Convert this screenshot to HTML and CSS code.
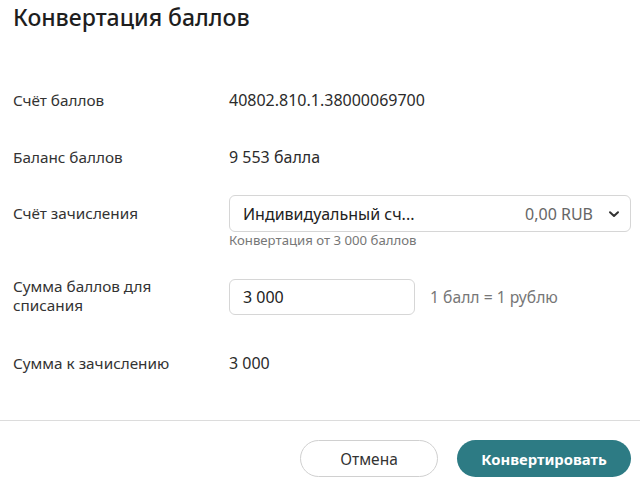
FILE: index.html
```html
<!DOCTYPE html>
<html lang="ru">
<head>
<meta charset="utf-8">
<link rel="stylesheet" href="styles.css">
</head>
<body>
<div class="dialog">
  <h1 class="title">Конвертация баллов</h1>
  <div class="form">
    <div class="row r1">
      <div class="label">Счёт баллов</div>
      <div class="value">40802.810.1.38000069700</div>
    </div>
    <div class="row r2">
      <div class="label">Баланс баллов</div>
      <div class="value">9 553 балла</div>
    </div>
    <div class="row r3">
      <div class="label">Счёт зачисления</div>
      <div class="field">
        <div class="select">
          <span class="sel-name">Индивидуальный сч...</span>
          <span class="sel-amount">0,00 RUB</span>
          <svg class="chev" width="14" height="14" viewBox="0 0 14 14"><path d="M3 5.2 L7 9 L11 5.2" fill="none" stroke="#333" stroke-width="2" stroke-linecap="round" stroke-linejoin="round"/></svg>
        </div>
        <div class="hint">Конвертация от 3 000 баллов</div>
      </div>
    </div>
    <div class="row r4">
      <div class="label">Сумма баллов для<br>списания</div>
      <div class="inline">
        <div class="input">3 000</div>
        <div class="rate">1 балл = 1 рублю</div>
      </div>
    </div>
    <div class="row r5">
      <div class="label">Сумма к зачислению</div>
      <div class="value">3 000</div>
    </div>
  </div>
  <div class="footer">
    <button class="btn btn-cancel">Отмена</button>
    <button class="btn btn-primary">Конвертировать</button>
  </div>
</div>
</body>
</html>
```
FILE: styles.css
```css
* { box-sizing: border-box; }
html, body { margin: 0; padding: 0; background: #fff; }
body {
  font-family: "Noto Sans", "Open Sans", sans-serif;
  color: #2b2b2b;
  width: 640px;
  height: 482px;
  overflow: hidden;
}
.dialog { display: flex; flex-direction: column; height: 482px; }
.title {
  margin: 0;
  padding: 0 13px;
  font-size: 23px;
  font-weight: 500;
  line-height: 34px;
  color: #1e1e1e;
}
.form {
  flex: 1;
  display: flex;
  flex-direction: column;
  padding: 48px 9px 0 13px;
}
.row { display: flex; align-items: center; min-height: 36px; }
.label { width: 216px; flex: none; font-size: 15.3px; line-height: 19px; color: #333; }
.value { font-size: 16px; color: #2b2b2b; }
.r2 { margin-top: 21px; }
.r3 { margin-top: 20px; align-items: flex-start; }
.r3 .label { padding-top: 9px; }
.field { flex: 1; display: flex; flex-direction: column; }
.select {
  height: 37px;
  border: 1px solid #d6d6d6;
  border-radius: 6px;
  display: flex;
  align-items: center;
  padding: 0 9px 0 13px;
  font-size: 16px;
}
.sel-name { flex: 1; color: #222; }
.sel-amount { color: #666; margin-right: 14px; }
.chev { display: block; }
.hint { font-size: 13.2px; color: #777; line-height: 17px; margin-top: 0; }
.r4 { margin-top: 30px; }
.r4 .label { margin-top: -3px; }
.inline { display: flex; align-items: center; gap: 15px; }
.input {
  width: 186px;
  height: 36px;
  border: 1px solid #d6d6d6;
  border-radius: 6px;
  padding: 0 13px;
  display: flex;
  align-items: center;
  font-size: 16px;
  color: #222;
}
.rate { font-size: 15.7px; color: #777; }
.r5 { margin-top: 30px; }
.footer {
  border-top: 1px solid #dcdcdc;
  display: flex;
  justify-content: flex-end;
  gap: 19px;
  padding: 19px 9px 5px 0;
}
.btn {
  height: 37px;
  border-radius: 19px;
  font-family: "Noto Sans", "Open Sans", sans-serif;
  font-size: 15.5px;
  cursor: pointer;
}
.btn-cancel {
  width: 138px;
  background: #fff;
  border: 1px solid #d0d0d0;
  color: #333;
}
.btn-primary {
  width: 174px;
  background: #2d7b84;
  border: none;
  color: #fff;
  font-weight: 700;
  font-size: 14.8px;
}
```
